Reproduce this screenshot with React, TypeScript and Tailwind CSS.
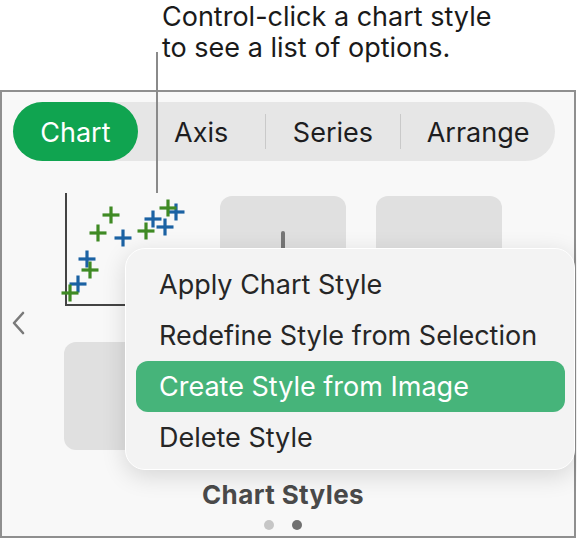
import React from "react";

const green = "#3f8a24";
const blue = "#1b62a3";

const greens: [number, number][] = [
  [70, 293], [90, 270], [98, 233], [111, 215], [146, 231], [168, 208],
];
const blues: [number, number][] = [
  [78, 284], [87, 259], [123, 238], [153, 219], [165, 227], [176, 212],
];

function Plus({ x, y, c }: { x: number; y: number; c: string }) {
  const s = 8.5;
  return (
    <g stroke={c} strokeWidth={3.2}>
      <line x1={x - s} y1={y} x2={x + s} y2={y} />
      <line x1={x} y1={y - s} x2={x} y2={y + s} />
    </g>
  );
}

function Scatter() {
  const ox = 64;
  const oy = 196;
  return (
    <svg width="140" height="120" viewBox={`${ox} ${oy - 8} 140 120`} className="-mt-[8px] overflow-visible">
      <polyline points="66,193 66,305 200,305" fill="none" stroke="#444" strokeWidth={2} />
      {blues.map(([x, y], i) => (
        <Plus key={"b" + i} x={x} y={y} c={blue} />
      ))}
      {greens.map(([x, y], i) => (
        <Plus key={"g" + i} x={x} y={y} c={green} />
      ))}
    </svg>
  );
}

export default function App() {
  const font = { fontFamily: "Inter, 'Noto Sans', 'Liberation Sans', sans-serif" };
  return (
    <div className="relative w-[577px] h-[539px] bg-white overflow-hidden text-[#1d1d1f]" style={font}>
      {/* annotation */}
      <div className="h-[90px] pl-[162px] pt-[1px]">
        <p className="text-[27px] leading-[31px] text-[#1a1a1a]">
          Control-click a chart style
          <br />
          to see a list of options.
        </p>
      </div>

      {/* panel */}
      <div className="w-[576px] h-[448px] border-2 border-[#8f8f8f] bg-[#f8f8f8] flex flex-col">
        {/* tabs */}
        <div className="mt-[10px] ml-[11px] w-[542px] h-[59px] rounded-full bg-[#e6e6e6] flex items-center text-[27px]">
          <div className="w-[125px] h-full rounded-full bg-[#10a450] text-white flex items-center justify-center pt-[3px]">
            Chart
          </div>
          <div className="w-[127px] flex items-center justify-center pt-[3px]">Axis</div>
          <div className="w-[1.5px] h-[35px] bg-[#c9c9c9]" />
          <div className="w-[134px] flex items-center justify-center pt-[3px]">Series</div>
          <div className="w-[1.5px] h-[35px] bg-[#c9c9c9]" />
          <div className="w-[154px] flex items-center justify-center pt-[3px]">Arrange</div>
        </div>

        {/* styles area */}
        <div className="flex mt-[35px]">
          <div className="w-[62px] h-[254px] flex items-center pl-[9px]">
            <svg width="16" height="28" viewBox="0 0 16 28">
              <polyline points="12,4 3,14 12,24" fill="none" stroke="#7a7a7a" strokeWidth={2.6} strokeLinecap="round" strokeLinejoin="round" />
            </svg>
          </div>
          <div className="w-[438px] flex flex-col items-center">
            <div className="grid grid-cols-[126px_126px_126px] grid-rows-[108px_108px] gap-x-[30px] gap-y-[38px]">
              <div className="relative">
                <Scatter />
              </div>
              <div className="rounded-[12px] bg-[#e0e0e0] flex justify-center pt-[35px]">
                <div className="w-[3.5px] h-[30px] rounded-full bg-[#777]" />
              </div>
              <div className="rounded-[12px] bg-[#e0e0e0]" />
              <div className="rounded-[12px] bg-[#e0e0e0]" />
              <div className="rounded-[12px] bg-[#e0e0e0]" />
              <div className="rounded-[12px] bg-[#e0e0e0]" />
            </div>
            <div className="mt-[30px] text-[26px] leading-[30px] font-bold tracking-[0.4px] text-[#4a4a4a]">Chart Styles</div>
            <div className="mt-[10px] flex gap-[18px]">
              <div className="w-[10px] h-[10px] rounded-full bg-[#c6c6c6]" />
              <div className="w-[10px] h-[10px] rounded-full bg-[#707070]" />
            </div>
          </div>
        </div>
      </div>

      {/* callout line */}
      <div className="absolute left-[156px] top-[52px] w-[2px] h-[141px] bg-[#8a8a8a]" />

      {/* context menu */}
      <div className="absolute left-[125px] top-[248px] w-[450px] h-[222px] rounded-[20px] bg-[#f3f3f3] border border-white shadow-[0_6px_24px_rgba(0,0,0,0.14)] pt-[10px] pl-[10px] pr-[9px] text-[27px] text-[#262626]">
        <div className="h-[51px] flex items-center pl-[23px] pt-[2px]">Apply Chart Style</div>
        <div className="h-[51px] flex items-center pl-[23px] pt-[2px]">Redefine Style from Selection</div>
        <div className="h-[51px] flex items-center pl-[23px] pt-[2px] rounded-[12px] bg-[#46b47a] text-white">Create Style from Image</div>
        <div className="h-[51px] flex items-center pl-[23px] pt-[2px]">Delete Style</div>
      </div>
    </div>
  );
}
